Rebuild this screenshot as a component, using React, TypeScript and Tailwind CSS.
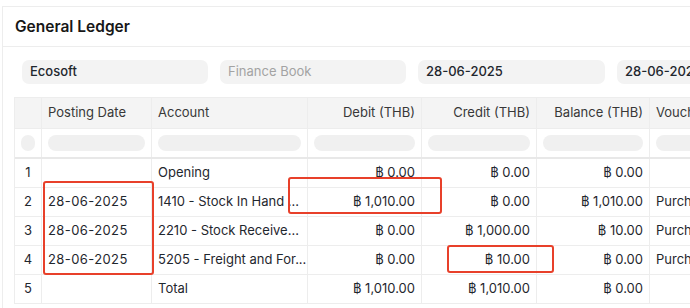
import React from 'react';

type Row = {
  no: string;
  date: string;
  account: string;
  debit: string;
  credit: string;
  balance: string;
  voucher: string;
};

const rows: Row[] = [
  { no: '1', date: '', account: 'Opening', debit: '฿ 0.00', credit: '฿ 0.00', balance: '฿ 0.00', voucher: '' },
  { no: '2', date: '28-06-2025', account: '1410 - Stock In Hand ...', debit: '฿ 1,010.00', credit: '฿ 0.00', balance: '฿ 1,010.00', voucher: 'Purchase Receipt' },
  { no: '3', date: '28-06-2025', account: '2210 - Stock Receive...', debit: '฿ 0.00', credit: '฿ 1,000.00', balance: '฿ 10.00', voucher: 'Purchase Receipt' },
  { no: '4', date: '28-06-2025', account: '5205 - Freight and For...', debit: '฿ 0.00', credit: '฿ 10.00', balance: '฿ 0.00', voucher: 'Purchase Receipt' },
  { no: '5', date: '', account: 'Total', debit: '฿ 1,010.00', credit: '฿ 1,010.00', balance: '฿ 0.00', voucher: '' },
];

// column widths in px: #, date, account, debit, credit, balance, voucher
const grid = 'grid grid-cols-[27px_110px_156px_114px_115px_113px_120px]';
const cell = 'border-r border-[#ededed] px-[6px] flex items-center overflow-hidden whitespace-nowrap';

export default function App() {
  return (
    <div
      className="relative w-[690px] h-[308px] overflow-hidden bg-white pl-[2px] pt-[6px] text-[#1f272e]"
      style={{ fontFamily: 'Inter, "Noto Sans", "DejaVu Sans", sans-serif' }}
    >
      <div className="h-full border-l border-t border-[#ededed]">
        {/* page title */}
        <div className="h-[40px] flex items-center px-[12px] border-b border-[#ededed]">
          <h1 className="text-[15.5px] font-semibold text-[#171717]">General Ledger</h1>
        </div>

        {/* filters */}
        <div className="flex gap-[12px] pl-[19px] pt-[13px] text-[13px]">
          <div className="w-[186px] h-[24px] shrink-0 rounded-[7px] bg-[#f3f3f3] flex items-center px-[8px] font-medium">Ecosoft</div>
          <div className="w-[186px] h-[24px] shrink-0 rounded-[7px] bg-[#f3f3f3] flex items-center px-[8px] text-[#a3a3a3]">Finance Book</div>
          <div className="w-[187px] h-[24px] shrink-0 rounded-[7px] bg-[#f3f3f3] flex items-center px-[8px] font-medium">28-06-2025</div>
          <div className="w-[187px] h-[24px] shrink-0 rounded-[7px] bg-[#f3f3f3] flex items-center px-[8px] font-medium">28-06-2025</div>
        </div>

        {/* table */}
        <div className="mt-[13px] ml-[11px] w-[800px] border-l border-t border-[#ededed] text-[13px]">
          <div className={`${grid} h-[31px] bg-[#f4f4f4] border-b border-[#ededed] text-[#383838]`}>
            <div className={cell}></div>
            <div className={cell}>Posting Date</div>
            <div className={cell}>Account</div>
            <div className={`${cell} justify-end`}>Debit (THB)</div>
            <div className={`${cell} justify-end`}>Credit (THB)</div>
            <div className={`${cell} justify-end`}>Balance (THB)</div>
            <div className={cell}>Voucher Type</div>
          </div>
          <div className={`${grid} h-[30px] border-b-2 border-[#e8e8e8]`}>
            <div className={`${cell} justify-center px-0`}>
              <div className="w-[17px] h-[16px] rounded-full bg-[#f0f0f0]" />
            </div>
            {[0, 1, 2, 3, 4, 5].map((i) => (
              <div key={i} className={cell}>
                <div className="w-full h-[16px] rounded-full bg-[#f0f0f0]" />
              </div>
            ))}
          </div>
          {rows.map((r) => (
            <div key={r.no} className={`${grid} h-[29px] border-b border-[#ededed]`}>
              <div className={`${cell} justify-center px-0`}>{r.no}</div>
              <div className={`${cell} tracking-[0.4px]`}>{r.date}</div>
              <div className={cell}>{r.account}</div>
              <div className={`${cell} justify-end`}>{r.debit}</div>
              <div className={`${cell} justify-end`}>{r.credit}</div>
              <div className={`${cell} justify-end`}>{r.balance}</div>
              <div className={cell}>{r.voucher}</div>
            </div>
          ))}
        </div>
      </div>

      {/* red annotation boxes */}
      <div className="absolute left-[43px] top-[181px] w-[111px] h-[94px] border-2 border-[#e8402a] rounded-[3px]" />
      <div className="absolute left-[288px] top-[177px] w-[154px] h-[37px] border-2 border-[#e8402a] rounded-[3px]" />
      <div className="absolute left-[447px] top-[245px] w-[107px] h-[28px] border-2 border-[#e8402a] rounded-[3px]" />
    </div>
  );
}
